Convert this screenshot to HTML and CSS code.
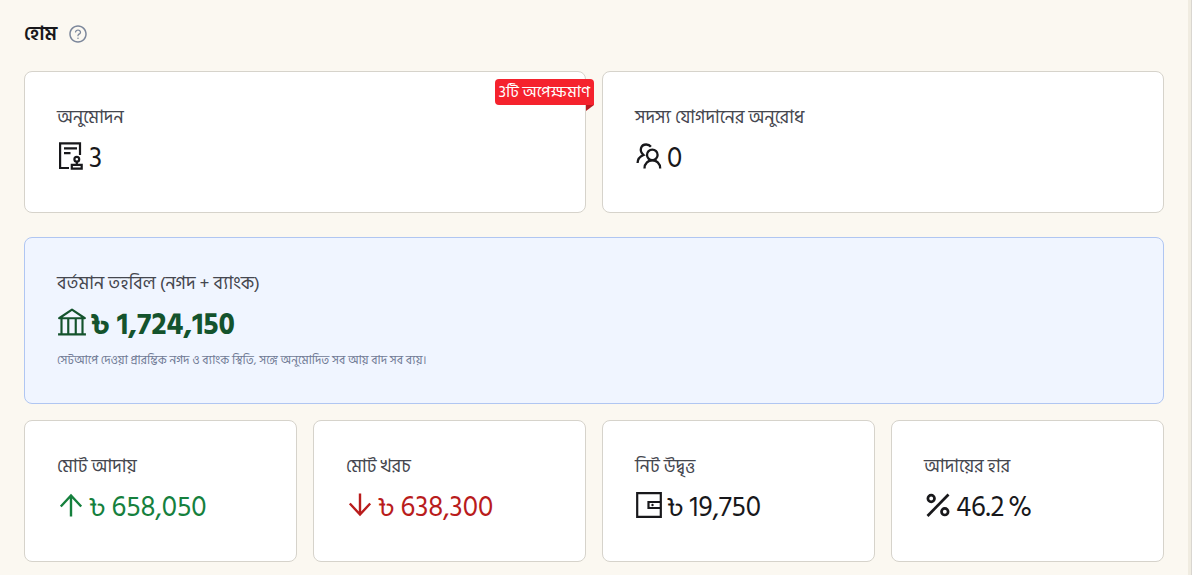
FILE: index.html
```
<!DOCTYPE html>
<html lang="bn">
<head>
<meta charset="utf-8">
<meta name="viewport" content="width=device-width, initial-scale=1">
<title>হোম</title>
<link rel="stylesheet" href="styles.css">
</head>
<body>
<main class="page">
  <header class="page-header">
    <h1 class="page-title">হোম</h1>
    <button class="help" type="button" aria-label="সাহায্য">
      <svg viewBox="0 0 1024 1024" width="20" height="20" fill="currentColor" aria-hidden="true"><path d="M512 64C264.600 64 64 264.600 64 512s200.600 448 448 448 448-200.600 448-448S759.400 64 512 64zm0 820c-205.400 0-372-166.600-372-372s166.600-372 372-372 372 166.600 372 372-166.600 372-372 372z"/><path d="M623.600 316.700C593.600 290.400 554 276 512 276s-81.600 14.500-111.600 40.700C369.200 344 352 380.700 352 420v7.600c0 4.400 3.600 8 8 8h48c4.400 0 8-3.600 8-8V420c0-44.100 43.100-80 96-80s96 35.900 96 80c0 31.100-22 59.600-56.100 72.700-21.200 8.100-39.200 22.300-52.100 40.900-13.100 19-19.900 41.800-19.900 64.900V620c0 4.400 3.600 8 8 8h48c4.400 0 8-3.600 8-8v-22.700a48.300 48.300 0 0 1 30.900-44.800c59-22.700 97.100-74.700 97.100-132.500 0-39.300-17.200-76-48.300-103.300zM472 732a40 40 0 1 0 80 0 40 40 0 1 0-80 0z"/></svg>
    </button>
  </header>

  <section class="grid grid-two">
    <article class="card">
      <span class="ribbon">3টি অপেক্ষমাণ</span>
      <h2 class="label">অনুমোদন</h2>
      <p class="value">
        <svg class="icon" viewBox="0 0 28 28" fill="none" stroke="currentColor" stroke-width="2.200" aria-hidden="true"><path d="M12 26H3.100V1.400H23V13M7 6.300h13M7 11.200h6.500M14.800 22.900h9.900v3.700h-9.900zM19.800 19.500v3.500"/><circle cx="19.800" cy="17.300" r="2.400"/></svg>
        <span>3</span>
      </p>
    </article>
    <article class="card">
      <h2 class="label">সদস্য যোগদানের অনুরোধ</h2>
      <p class="value">
        <svg class="icon" viewBox="0 0 28 28" fill="none" stroke="currentColor" stroke-width="2.300" aria-hidden="true"><circle cx="17.300" cy="12.900" r="5.300"/><path d="M9.500 26.500c0-11 15.700-11 15.700 0M2.600 21c0-4 2-6.500 6-8C3.500 8.500 6 2.500 11.200 2.500c2.200 0 3.600.8 4.700 2.300"/></svg>
        <span>0</span>
      </p>
    </article>
  </section>

  <section class="card card-fund">
    <h2 class="label">বর্তমান তহবিল (নগদ + ব্যাংক)</h2>
    <p class="value value-fund">
      <svg class="icon" viewBox="0 0 28 28" fill="none" stroke="currentColor" stroke-width="2" aria-hidden="true"><path d="M2 10.500 14 2.500l12 8zM1 25.500h26M4.200 10.500v15M10.500 10.500v15M17.500 10.500v15M23.800 10.500v15" stroke-linejoin="round"/></svg>
      <span>৳ 1,724,150</span>
    </p>
    <p class="note">সেটআপে দেওয়া প্রারম্ভিক নগদ ও ব্যাংক স্থিতি, সঙ্গে অনুমোদিত সব আয় বাদ সব ব্যয়।</p>
  </section>

  <section class="grid grid-four">
    <article class="card">
      <h2 class="label">মোট আদায়</h2>
      <p class="value value-income">
        <svg class="icon" viewBox="0 0 28 28" fill="none" stroke="currentColor" stroke-width="2.400" aria-hidden="true"><path d="M14 25.500V4.500M3.800 15.500 14 4.500l10.200 11"/></svg>
        <span>৳ 658,050</span>
      </p>
    </article>
    <article class="card">
      <h2 class="label">মোট খরচ</h2>
      <p class="value value-expense">
        <svg class="icon" viewBox="0 0 28 28" fill="none" stroke="currentColor" stroke-width="2.400" aria-hidden="true"><path d="M14 2.500v21M3.800 12.500l10.200 11 10.200-11"/></svg>
        <span>৳ 638,300</span>
      </p>
    </article>
    <article class="card">
      <h2 class="label">নিট উদ্বৃত্ত</h2>
      <p class="value">
        <svg class="icon" viewBox="0 0 28 28" fill="none" stroke="currentColor" stroke-width="2.200" aria-hidden="true"><path d="M2.200 2.200h23.600v23.600H2.200zM26 11H13.500v6H26"/><circle cx="17.500" cy="14" r="1.200" fill="currentColor" stroke="none"/></svg>
        <span>৳ 19,750</span>
      </p>
    </article>
    <article class="card">
      <h2 class="label">আদায়ের হার</h2>
      <p class="value">
        <svg class="icon" viewBox="0 0 28 28" fill="none" stroke="currentColor" stroke-width="2.700" aria-hidden="true"><path d="M3.500 25 24.500 3.500"/><circle cx="7.200" cy="7.500" r="3.300"/><circle cx="20.800" cy="20.700" r="3.300"/></svg>
        <span>46.2</span>
        <span>%</span>
      </p>
    </article>
  </section>
</main>
</body>
</html>
```
FILE: styles.css
```
* {
  box-sizing: border-box;
}

body {
  margin: 0;
  border-right: 1px solid #d9d6d0;
  background: #fbf8f1;
  color: #18181b;
  font-family: "Hind Siliguri", "Noto Sans Bengali", "Noto Sans", sans-serif;
}

.page {
  display: flex;
  flex-direction: column;
  min-height: 100vh;
  padding: 20px 24px 13px;
  border-right: 3px solid #f0ece1;
}

.page-header {
  display: flex;
  align-items: center;
  gap: 11px;
  height: 28px;
  margin-bottom: 23px;
}

.page-title {
  margin: 0;
  font-size: 20px;
  line-height: 28px;
  font-weight: 600;
}

.help {
  display: flex;
  padding: 0;
  border: 0;
  background: none;
  color: #7c879b;
}

.grid {
  display: grid;
  gap: 16px;
}

.grid-two {
  grid-template-columns: repeat(2, 1fr);
  margin-bottom: 24px;
}

.grid-four {
  grid-template-columns: repeat(4, 1fr);
  margin-top: 16px;
}

.card {
  position: relative;
  min-width: 0;
  padding: 32px 32px 28px;
  border: 1px solid #d6d3cb;
  border-radius: 8px;
  background: #fff;
}

.card-fund {
  padding-bottom: 32px;
  border-color: #b0c6f2;
  background: #f0f5ff;
}

.label {
  margin: 0 0 2px;
  color: #45474f;
  font-size: 18px;
  line-height: 28px;
  font-weight: 400;
  white-space: nowrap;
}

.value {
  display: flex;
  align-items: center;
  gap: 4px;
  margin: 0;
  font-size: 28px;
  line-height: 50px;
  white-space: nowrap;
}

.icon {
  flex: none;
  width: 28px;
  height: 28px;
  margin-bottom: 6px;
}

.value-fund {
  color: #14532d;
  font-size: 30px;
  font-weight: 700;
}

.value-fund .icon {
  width: 30px;
  height: 30px;
}

.value-income {
  color: #15803d;
}

.value-expense {
  color: #b91c1c;
}

.note {
  margin: 1px 0 0;
  color: #717b96;
  font-size: 12px;
  line-height: 20px;
}

.ribbon {
  position: absolute;
  top: 7px;
  right: -9px;
  padding: 0 4px;
  border-radius: 4px 4px 0 4px;
  background: #f5222d;
  color: #fff;
  font-size: 16px;
  line-height: 26px;
  font-weight: 400;
  white-space: nowrap;
}

.ribbon::after {
  content: "";
  position: absolute;
  top: 100%;
  right: 0;
  border-top: 6px solid #b81a22;
  border-right: 8px solid transparent;
}
```
